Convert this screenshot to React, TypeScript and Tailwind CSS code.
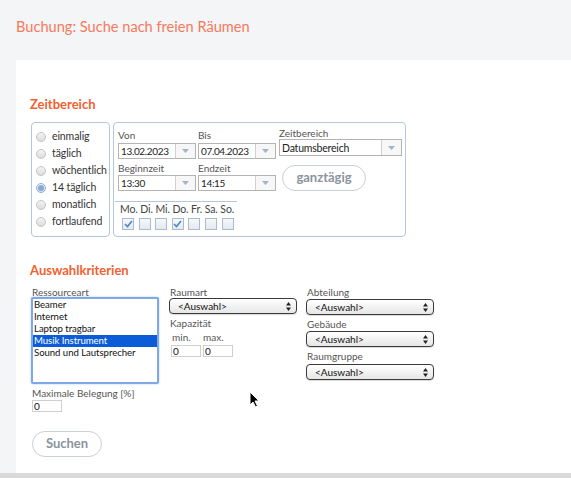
import React from "react";

const Arrow = () => (
  <div className="flex h-full w-[20px] items-center justify-center border-l border-[#d0d0d0] bg-[#f7f7f7]">
    <svg width="7" height="4" viewBox="0 0 7 4">
      <path d="M0 0 L7 0 L3.5 4 Z" fill="#9fb3cc" />
    </svg>
  </div>
);

const DropInput = ({ value, w }: { value: string; w: string }) => (
  <div className={`flex h-[16px] ${w} items-center border border-[#b4b4b4] bg-white`}>
    <div className="flex-1 pl-[2px] text-[10px] leading-[14px] tracking-[-0.35px] text-[#222]">{value}</div>
    <Arrow />
  </div>
);

const MacSelect = () => (
  <div className="flex h-[16px] w-[128px] items-center justify-between rounded-[4px] border border-[#3a3a3a] bg-gradient-to-b from-white to-[#e6e6e6] pl-[8px] pr-[5px] shadow-[0_1px_1px_rgba(0,0,0,0.15)]">
    <span className="text-[10px] leading-[12px] text-[#111]">&lt;Auswahl&gt;</span>
    <svg width="5" height="9" viewBox="0 0 5 9">
      <path d="M0 3.5 L2.5 0 L5 3.5 Z" fill="#222" />
      <path d="M0 5.5 L2.5 9 L5 5.5 Z" fill="#222" />
    </svg>
  </div>
);

const Radio = ({ label, checked }: { label: string; checked?: boolean }) => (
  <div className="flex h-[17px] items-center gap-[6px]">
    <div
      className={`flex h-[10px] w-[10px] items-center justify-center rounded-full border ${
        checked ? "border-[#8fb0d6]" : "border-[#c4c4c4]"
      } bg-gradient-to-b from-[#f4f4f4] to-[#dcdcdc]`}
    >
      {checked && <div className="h-[6px] w-[6px] rounded-full bg-[#86aad6]" />}
    </div>
    <span className="text-[10.5px] leading-[13px] tracking-[-0.1px] text-[#333]">{label}</span>
  </div>
);

const Check = ({ checked }: { checked?: boolean }) => (
  <div className="flex h-[12px] w-[12px] items-center justify-center border border-[#a9bccf] bg-gradient-to-b from-[#f6f8fa] to-[#e4eaf0]">
    {checked && (
      <svg width="9" height="8" viewBox="0 0 9 8">
        <path d="M1 4 L3.5 6.5 L8 1" stroke="#4d86c6" strokeWidth="1.6" fill="none" />
      </svg>
    )}
  </div>
);

const Label = ({ children, cls = "" }: { children: React.ReactNode; cls?: string }) => (
  <div className={`text-[10px] leading-[12px] text-[#555] ${cls}`}>{children}</div>
);

const SmallInput = ({ w = "w-[30px]" }: { w?: string }) => (
  <div className={`flex h-[12px] ${w} items-center border border-[#cfcfcf] bg-white pl-[1px] text-[10px] leading-[10px] text-[#111]`}>
    0
  </div>
);

export default function App() {
  const checked = [true, false, false, true, false, false, false];
  return (
    <div className="relative h-[478px] w-full overflow-hidden bg-[#f4f5f7] font-['Lato',sans-serif]">
      <div className="pl-[16px] pt-[17px] text-[14.6px] leading-[20px] text-[#f47a5c]">
        Buchung: Suche nach freien Räumen
      </div>
      <div className="ml-[16px] mt-[23px] h-[413px] bg-white pl-[14px] pt-[36px]">
        <div className="text-[13px] font-bold leading-[16px] text-[#f4602f]">Zeitbereich</div>
        <div className="ml-[1px] mt-[10px] flex gap-[3px]">
          {/* radio box */}
          <div className="h-[115px] w-[79px] rounded-[4px] border border-[#b3c7df] pl-[4px] pt-[5px]">
            <Radio label="einmalig" />
            <Radio label="täglich" />
            <Radio label="wöchentlich" />
            <Radio label="14 täglich" checked />
            <Radio label="monatlich" />
            <Radio label="fortlaufend" />
          </div>
          {/* main box */}
          <div className="h-[115px] w-[293px] rounded-[4px] border border-[#b3c7df]">
            <div className="flex pl-[4px]">
              <div className="w-[80px] pt-[6px]">
                <Label>Von</Label>
                <div className="mt-[2px]">
                  <DropInput value="13.02.2023" w="w-[78px]" />
                </div>
                <Label cls="mt-[3px]">Beginnzeit</Label>
                <div className="mt-[1px]">
                  <DropInput value="13:30" w="w-[78px]" />
                </div>
              </div>
              <div className="w-[81px] pt-[6px]">
                <Label>Bis</Label>
                <div className="mt-[2px]">
                  <DropInput value="07.04.2023" w="w-[78px]" />
                </div>
                <Label cls="mt-[3px]">Endzeit</Label>
                <div className="mt-[1px]">
                  <DropInput value="14:15" w="w-[78px]" />
                </div>
              </div>
              <div className="pt-[4px]">
                <Label cls="text-[10.5px]">Zeitbereich</Label>
                <div className="flex h-[17px] w-[123px] items-center border border-[#b4b4b4] bg-white">
                  <div className="flex-1 pl-[2px] text-[10.5px] leading-[14px] tracking-[-0.2px] text-[#222]">Datumsbereich</div>
                  <Arrow />
                </div>
                <div className="ml-[3px] mt-[9px] flex h-[26px] w-[84px] items-center justify-center rounded-full border border-[#c9d0d8] text-[13px] font-bold text-[#8b949e]">
                  ganztägig
                </div>
              </div>
            </div>
            <div className="ml-[1px] mt-[10px] w-[122px] border-t border-[#b3c7df] pl-[5px] pt-[1px]">
              <div className="whitespace-nowrap text-[10.5px] leading-[12px] tracking-[-0.1px] text-[#444]">
                Mo. Di. Mi. Do. Fr. Sa. So.
              </div>
              <div className="mt-[3px] grid grid-cols-[repeat(7,16.6px)] pl-[2px]">
                {checked.map((c, i) => (
                  <Check key={i} checked={c} />
                ))}
              </div>
            </div>
          </div>
        </div>

        <div className="mt-[25px] text-[13px] font-bold leading-[16px] text-[#f4602f]">Auswahlkriterien</div>
        <div className="ml-[1px] mt-[8px] flex">
          <div className="w-[138px]">
            <Label cls="h-[11px] pl-[1px] text-[10.5px]">Ressourceart</Label>
            <div className="h-[87px] w-[128px] rounded-[2px] border-2 border-[#7fa8e6] bg-white shadow-[0_0_2px_#9fc0f0]">
              {["Beamer", "Internet", "Laptop tragbar", "Musik Instrument", "Sound und Lautsprecher"].map((t) => (
                <div
                  key={t}
                  className={`h-[12px] pl-[1px] text-[9.6px] leading-[12px] tracking-[-0.05px] ${
                    t === "Musik Instrument" ? "bg-[#0b5dd7] text-white" : "text-[#111]"
                  }`}
                >
                  {t}
                </div>
              ))}
            </div>
            <Label cls="mt-[3px] pl-[1px] text-[9.6px]">Maximale Belegung [%]</Label>
            <div className="ml-[1px] mt-[1px]">
              <SmallInput />
            </div>
            <div className="ml-[1px] mt-[19px] flex h-[26px] w-[70px] items-center justify-center rounded-full border border-[#c9d0d8] text-[13px] font-bold text-[#8b949e]">
              Suchen
            </div>
          </div>
          <div className="w-[137px]">
            <Label cls="pl-[1px]">Raumart</Label>
            <MacSelect />
            <Label cls="mt-[3px] pl-[1px]">Kapazität</Label>
            <div className="mt-[2px] flex pl-[3px] text-[10px] leading-[12px] text-[#555]">
              <span className="w-[31px]">min.</span>
              <span>max.</span>
            </div>
            <div className="mt-[2px] flex gap-[2px] pl-[2px]">
              <SmallInput />
              <SmallInput />
            </div>
          </div>
          <div>
            <Label cls="pl-[1px]">Abteilung</Label>
            <div className="mt-[1px]">
              <MacSelect />
            </div>
            <Label cls="mt-[3px] pl-[1px]">Gebäude</Label>
            <div className="mt-[1px]">
              <MacSelect />
            </div>
            <Label cls="mt-[3px] pl-[1px]">Raumgruppe</Label>
            <div className="mt-[2px]">
              <MacSelect />
            </div>
          </div>
        </div>
      </div>
      <div className="h-[5px] w-full bg-[#d9d9d9]" />
      {/* mouse cursor */}
      <svg className="absolute left-[249px] top-[391px]" width="11" height="17" viewBox="0 0 11 17">
        <path d="M1 1 L1 14 L4 11 L6.5 16 L8.5 15 L6 10 L10 10 Z" fill="#000" stroke="#fff" strokeWidth="1" />
      </svg>
    </div>
  );
}
